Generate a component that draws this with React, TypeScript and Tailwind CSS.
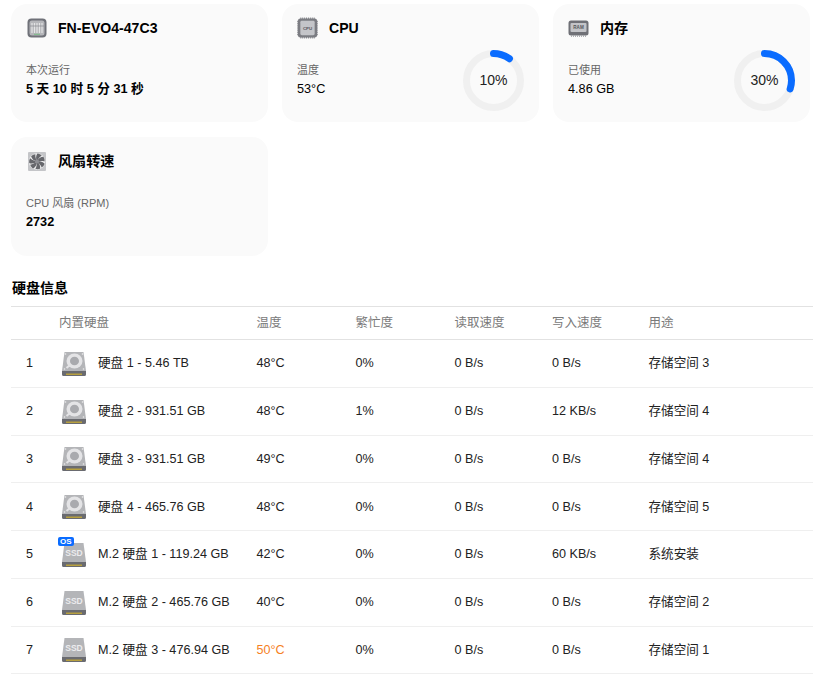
import React from "react";

const FONT = "font-['Liberation_Sans','Noto_Sans_CJK_SC',sans-serif]";
const GRID = "grid grid-cols-[48px_197.500px_99px_99px_97.500px_96.500px_1fr]";

function DeviceIcon() {
  return (
    <svg width="20" height="20" viewBox="0 0 20 20">
      <rect x="0.5" y="0.5" width="19" height="19" rx="4" fill="#6f7178" />
      <rect x="2.5" y="2.5" width="15" height="15" rx="2.5" fill="#b5b6ba" />
      {[5, 7.5, 10, 12.5, 15].map((x) => (
        <line key={x} x1={x} y1="5" x2={x} y2="15" stroke="#e4e4e6" strokeWidth="1.2" />
      ))}
      <line x1="3" y1="8" x2="17" y2="8" stroke="#85868c" strokeWidth="0.7" />
      <line x1="7" y1="16.3" x2="13" y2="16.3" stroke="#6cc07a" strokeWidth="0.8" />
    </svg>
  );
}

function CpuIcon() {
  const pins = [3, 5, 7, 9, 11, 13, 15, 17];
  return (
    <svg width="22" height="22" viewBox="0 0 22 22">
      {pins.map((p) => (
        <g key={p} stroke="#77787e" strokeWidth="0.9">
          <line x1={p + 1} y1="0" x2={p + 1} y2="22" />
          <line x1="0" y1={p + 1} x2="22" y2={p + 1} />
        </g>
      ))}
      <rect x="1" y="1" width="20" height="20" rx="2.5" fill="#7b7c82" />
      <rect x="3.5" y="3.5" width="15" height="15" rx="1.5" fill="#c4c5c9" />
      <text x="11" y="12.6" textAnchor="middle" fontSize="4.6" fontWeight="700" fill="#55565b" fontFamily="Liberation Sans">
        CPU
      </text>
    </svg>
  );
}

function RamIcon() {
  return (
    <svg width="21" height="20" viewBox="0 0 21 20">
      <rect x="0.5" y="2.5" width="20" height="15" rx="2.5" fill="#6f7076" />
      <rect x="2.5" y="5" width="16" height="9" rx="1" fill="#c3c4c8" />
      <text x="10.5" y="11.4" textAnchor="middle" fontSize="4.6" fontWeight="700" fill="#55565b" fontFamily="Liberation Sans">
        RAM
      </text>
      {[3, 5, 7, 9, 11, 13, 15, 17].map((x) => (
        <line key={x} x1={x + 0.5} y1="17" x2={x + 0.5} y2="19" stroke="#a5a6aa" strokeWidth="0.9" />
      ))}
    </svg>
  );
}

function FanIcon() {
  return (
    <svg width="18" height="19" viewBox="0 0 18 19">
      <rect width="18" height="19" rx="1" fill="#c4c5c8" />
      <circle cx="9" cy="9.5" r="8.200" fill="#eeeeef" />
      {[0, 51, 103, 154, 206, 257, 309].map((a) => (
        <path
          key={a}
          d="M9 9.500C7.600 7 7.800 3.600 9.400 1.600c1.900.2 3.300.9 4.300 2C11.500 5 10.200 7.200 9 9.500Z"
          fill="#66676c"
          transform={`rotate(${a} 9 9.5)`}
        />
      ))}
      <circle cx="9" cy="9.5" r="2" fill="#8d8e93" />
    </svg>
  );
}

function DriveBody() {
  return (
    <>
      <path d="M3.500 1h19l2.500 19H1Z" fill="#b4b5b8" />
      <path d="M1 20h24v3.500a1.500 1.500 0 0 1-1.500 1.500h-21A1.500 1.500 0 0 1 1 23.500Z" fill="#6a6b70" />
      <rect x="5" y="22.500" width="16" height="1.500" fill="#b7a03f" />
    </>
  );
}

function HddIcon() {
  return (
    <svg width="26" height="26" viewBox="0 0 26 26">
      <DriveBody />
      <ellipse cx="13.500" cy="10" rx="8" ry="7.500" fill="#e4e4e6" />
      <ellipse cx="13.500" cy="10" rx="4.500" ry="4.300" fill="#a9aaae" />
      <path d="M5.500 17l4-3.500" stroke="#e4e4e6" strokeWidth="2" />
      <circle cx="4.500" cy="3" r="0.800" fill="#ededee" />
      <circle cx="21.500" cy="3" r="0.800" fill="#ededee" />
      <circle cx="3.500" cy="18" r="0.800" fill="#ededee" />
      <circle cx="22.500" cy="18" r="0.800" fill="#ededee" />
    </svg>
  );
}

function SsdIcon() {
  return (
    <svg width="26" height="26" viewBox="0 0 26 26">
      <DriveBody />
      <text x="13" y="14" textAnchor="middle" fontSize="8.500" fontWeight="700" fill="#ececee" fontFamily="Liberation Sans">
        SSD
      </text>
    </svg>
  );
}

function Ring({ value }: { value: number }) {
  const r = 27;
  const c = 2 * Math.PI * r;
  return (
    <div className="relative h-[61px] w-[61px]">
      <svg width="61" height="61" viewBox="0 0 61 61" className="-rotate-90">
        <circle cx="30.500" cy="30.500" r={r} fill="none" stroke="#f0f0f0" strokeWidth="7" />
        <circle
          cx="30.500"
          cy="30.500"
          r={r}
          fill="none"
          stroke="#0a6cff"
          strokeWidth="7"
          strokeLinecap="round"
          strokeDasharray={`${(c * value) / 100} ${c}`}
        />
      </svg>
      <div className="absolute inset-0 flex items-center justify-center text-[14px] text-[#222]">{value}%</div>
    </div>
  );
}

function Card({
  icon,
  title,
  label,
  value,
  bold,
  ring,
  height,
}: {
  icon: React.ReactNode;
  title: string;
  label: string;
  value: string;
  bold?: boolean;
  ring?: number;
  height: string;
}) {
  return (
    <div className={`${height} rounded-[16px] bg-[#fafafa] pl-[15px] pr-[15px] pt-[13px]`}>
      <div className="flex h-[22px] items-center gap-[11px]">
        <div className="flex w-[21px] justify-center">{icon}</div>
        <span className="text-[14.100px] font-bold leading-[22px] text-black">{title}</span>
      </div>
      <div className="relative mt-[23px]">
        <div className="text-[11px] leading-[16px] text-[#666]">{label}</div>
        <div className={`mt-[1px] text-[12.700px] leading-[20px] text-black ${bold ? "font-bold" : ""}`}>{value}</div>
        {ring !== undefined && (
          <div className="absolute right-0 top-[-12px]">
            <Ring value={ring} />
          </div>
        )}
      </div>
    </div>
  );
}

const disks = [
  { name: "硬盘 1 - 5.46 TB", temp: "48°C", busy: "0%", read: "0 B/s", write: "0 B/s", use: "存储空间 3" },
  { name: "硬盘 2 - 931.51 GB", temp: "48°C", busy: "1%", read: "0 B/s", write: "12 KB/s", use: "存储空间 4" },
  { name: "硬盘 3 - 931.51 GB", temp: "49°C", busy: "0%", read: "0 B/s", write: "0 B/s", use: "存储空间 4" },
  { name: "硬盘 4 - 465.76 GB", temp: "48°C", busy: "0%", read: "0 B/s", write: "0 B/s", use: "存储空间 5" },
  { name: "M.2 硬盘 1 - 119.24 GB", temp: "42°C", busy: "0%", read: "0 B/s", write: "60 KB/s", use: "系统安装", ssd: true, os: true },
  { name: "M.2 硬盘 2 - 465.76 GB", temp: "40°C", busy: "0%", read: "0 B/s", write: "0 B/s", use: "存储空间 2", ssd: true },
  { name: "M.2 硬盘 3 - 476.94 GB", temp: "50°C", busy: "0%", read: "0 B/s", write: "0 B/s", use: "存储空间 1", ssd: true, hot: true },
];

export default function App() {
  return (
    <div className={`${FONT} h-[686px] w-[813px] overflow-hidden bg-white pl-[11px] pt-[4px]`}>
      <div className="grid w-[799px] grid-cols-3 items-start gap-x-[14px] gap-y-[15px]">
        <Card icon={<DeviceIcon />} title="FN-EVO4-47C3" label="本次运行" value="5 天 10 时 5 分 31 秒" bold height="h-[118px]" />
        <Card icon={<CpuIcon />} title="CPU" label="温度" value="53°C" ring={10} height="h-[118px]" />
        <Card icon={<RamIcon />} title="内存" label="已使用" value="4.86 GB" ring={30} height="h-[118px]" />
        <Card icon={<FanIcon />} title="风扇转速" label="CPU 风扇 (RPM)" value="2732" bold height="h-[119px]" />
      </div>

      <div className="mt-[22px] pl-[1px] text-[14px] font-bold leading-[20px] text-black">硬盘信息</div>

      <div className="mt-[8px]">
        <div className={`${GRID} h-[34px] items-center border-y border-[#e2e2e2] text-[12.500px] text-[#7a7a7a]`}>
          <span />
          <span>内置硬盘</span>
          <span>温度</span>
          <span>繁忙度</span>
          <span>读取速度</span>
          <span>写入速度</span>
          <span>用途</span>
        </div>
        {disks.map((d, i) => (
          <div key={d.name} className={`${GRID} h-[47.750px] items-center border-b border-[#efefef] pt-[1px] text-[12.600px] text-[#222]`}>
            <span className="pl-[15px]">{i + 1}</span>
            <div className="flex items-center">
              <div className="relative ml-[2px] flex h-[26px] w-[26px] items-center justify-center">
                {d.ssd ? <SsdIcon /> : <HddIcon />}
                {d.os && (
                  <span className="absolute left-[-3px] top-[-5px] rounded-[2px] bg-[#0a6cff] px-[2px] text-[8px] font-bold leading-[9px] text-white">
                    OS
                  </span>
                )}
              </div>
              <span className="ml-[11px] whitespace-nowrap">{d.name}</span>
            </div>
            <span className={d.hot ? "text-[#f5811f]" : ""}>{d.temp}</span>
            <span>{d.busy}</span>
            <span>{d.read}</span>
            <span>{d.write}</span>
            <span>{d.use}</span>
          </div>
        ))}
      </div>
    </div>
  );
}
